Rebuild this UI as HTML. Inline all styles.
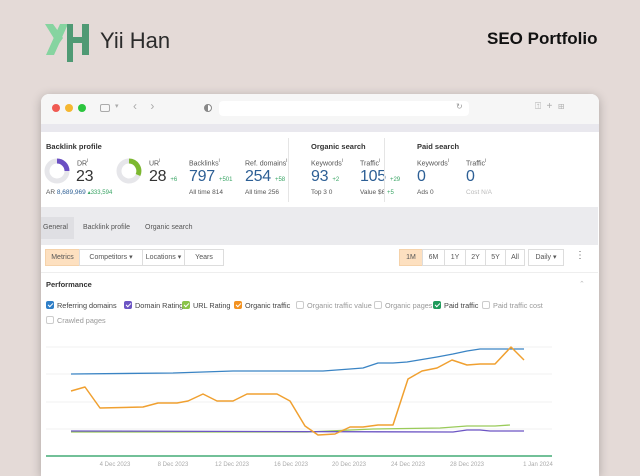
<!DOCTYPE html>
<html style="overflow:hidden;width:640px;height:476px"><head><meta charset="utf-8"><style>
*{margin:0;padding:0;box-sizing:border-box}
body{width:640px;height:476px;background:#e4dad7;position:relative;overflow:hidden;font-family:"Liberation Sans",sans-serif;color:#333}
.a{position:absolute;white-space:nowrap}
.s{font-size:7px;color:#555}
.big{font-size:16px;color:#333;letter-spacing:-0.3px}
.blue{color:#2d5f95}
.g{color:#3aa565;font-size:6px;letter-spacing:0}
.btn{position:absolute;top:249px;height:17px;border:1px solid #ddd;background:#fff;font-size:7px;color:#555;text-align:center;line-height:15px}
.cb{display:inline-block;width:8px;height:8px;border-radius:2px;vertical-align:-1px;margin-right:3px;position:relative}
.cb.on::after{content:"";position:absolute;left:2.5px;top:0.5px;width:2px;height:4px;border:solid #fff;border-width:0 1.3px 1.3px 0;transform:rotate(45deg)}
.off{border:1px solid #ccc;background:#fff}
.leg{position:absolute;font-size:7.3px;color:#444;white-space:nowrap}
</style></head><body>
<svg class="a" style="left:44px;top:22px" width="48" height="42" viewBox="44 22 48 42">
<polygon points="45,24 53,24 63,38 58,45" fill="#86d4a0"/>
<polygon points="60,24 68,24 54,55 46,55" fill="#86d4a0"/>
<rect x="67" y="24" width="6" height="38" fill="#4f9a74"/>
<rect x="82" y="24" width="7" height="31" fill="#4f9a74"/>
<rect x="67" y="37" width="22" height="6" fill="#4f9a74"/>
</svg>
<div class="a" style="left:100px;top:28px;font-size:22px;font-weight:500;color:#2b2b2b">Yii Han</div>
<div class="a" style="left:487px;top:29px;font-size:17px;font-weight:bold;color:#111">SEO Portfolio</div>

<div class="a" style="left:41px;top:94px;width:558px;height:382px;background:#fff;border-radius:8px 8px 0 0;box-shadow:0 2px 10px rgba(0,0,0,.25);overflow:hidden">
 <div style="height:30px;background:#f6f6f6"></div>
 <div style="height:8px;background:#e9e8ee"></div>
</div>
<div class="a" style="left:52px;top:104px;width:8px;height:8px;border-radius:50%;background:#f05a52"></div>
<div class="a" style="left:65px;top:104px;width:8px;height:8px;border-radius:50%;background:#f5b731"></div>
<div class="a" style="left:78px;top:104px;width:8px;height:8px;border-radius:50%;background:#2bc53e"></div>
<div class="a" style="left:100px;top:104px;width:10px;height:8px;border:1px solid #aaa;border-radius:2px"></div>
<div class="a" style="left:115px;top:102px;font-size:7px;color:#aaa">▾</div>
<div class="a" style="left:133px;top:99px;font-size:12px;color:#aaa">‹&nbsp;&nbsp;&nbsp;&nbsp;›</div>
<div class="a" style="left:204px;top:104px;width:8px;height:8px;border-radius:50%;border:1px solid #888;background:linear-gradient(90deg,#888 50%,#fff 50%)"></div>
<div class="a" style="left:219px;top:101px;width:250px;height:15px;background:#fff;border-radius:4px"></div>
<div class="a" style="left:456px;top:102px;font-size:8px;color:#999">↻</div>
<div class="a" style="left:535px;top:101px;font-size:10px;color:#aaa">⍐&nbsp;&nbsp;+&nbsp;&nbsp;⊞</div>

<div class="a" style="left:46px;top:142px;font-size:7.5px;font-weight:bold;color:#333">Backlink profile</div>
<svg class="a" style="left:44px;top:158px" width="26" height="26"><circle cx="13" cy="13" r="10" fill="none" stroke="#e6e6ea" stroke-width="5"/><path d="M13 3 A10 10 0 0 1 23 13" fill="none" stroke="#6b4fc3" stroke-width="5"/></svg>
<svg class="a" style="left:116px;top:158px" width="26" height="26"><circle cx="13" cy="13" r="10" fill="none" stroke="#e6e6ea" stroke-width="5"/><path d="M13 3 A10 10 0 0 1 22 17" fill="none" stroke="#7cb82f" stroke-width="5"/></svg>
<div class="a s" style="left:77px;top:158px">DR<sup style="font-size:5px">i</sup></div>
<div class="a big" style="left:76px;top:168px">23</div>
<div class="a s" style="left:46px;top:189px;font-size:6.5px">AR <span class="blue">8,689,969</span> <span class="g">▴333,594</span></div>
<div class="a s" style="left:149px;top:158px">UR<sup style="font-size:5px">i</sup></div>
<div class="a big" style="left:149px;top:168px">28 <span class="g">+6</span></div>
<div class="a s" style="left:189px;top:158px">Backlinks<sup style="font-size:5px">i</sup></div>
<div class="a big blue" style="left:189px;top:168px">797 <span class="g">+501</span></div>
<div class="a s" style="left:189px;top:189px;font-size:6.5px">All time 814</div>
<div class="a s" style="left:245px;top:158px">Ref. domains<sup style="font-size:5px">i</sup></div>
<div class="a big blue" style="left:245px;top:168px">254 <span class="g">+58</span></div>
<div class="a s" style="left:245px;top:189px;font-size:6.5px">All time 256</div>
<div class="a" style="left:288px;top:138px;width:1px;height:64px;background:#e5e5e5"></div>
<div class="a" style="left:311px;top:142px;font-size:7.5px;font-weight:bold;color:#333">Organic search</div>
<div class="a s" style="left:311px;top:158px">Keywords<sup style="font-size:5px">i</sup></div>
<div class="a big blue" style="left:311px;top:168px">93 <span class="g">+2</span></div>
<div class="a s" style="left:311px;top:189px;font-size:6.5px">Top 3 0</div>
<div class="a s" style="left:360px;top:158px">Traffic<sup style="font-size:5px">i</sup></div>
<div class="a big blue" style="left:360px;top:168px">105 <span class="g">+29</span></div>
<div class="a s" style="left:360px;top:189px;font-size:6.5px">Value $6 <span class="g">+5</span></div>
<div class="a" style="left:384px;top:138px;width:1px;height:64px;background:#e5e5e5"></div>
<div class="a" style="left:417px;top:142px;font-size:7.5px;font-weight:bold;color:#333">Paid search</div>
<div class="a s" style="left:417px;top:158px">Keywords<sup style="font-size:5px">i</sup></div>
<div class="a big blue" style="left:417px;top:168px">0</div>
<div class="a s" style="left:417px;top:189px;font-size:6.5px">Ads 0</div>
<div class="a s" style="left:466px;top:158px">Traffic<sup style="font-size:5px">i</sup></div>
<div class="a big blue" style="left:466px;top:168px">0</div>
<div class="a s" style="left:466px;top:189px;font-size:6.5px;color:#bbb">Cost N/A</div>

<div class="a" style="left:41px;top:207px;width:557px;height:38px;background:#ebebee"></div>
<div class="a" style="left:41px;top:217px;width:33px;height:22px;background:#dfdfe3"></div>
<div class="a s" style="left:43px;top:224px">General</div>
<div class="a s" style="left:83px;top:224px">Backlink profile</div>
<div class="a s" style="left:145px;top:224px">Organic search</div>

<div class="btn" style="left:45px;width:35px;background:#fde0c0;border-color:#f5d2aa">Metrics</div>
<div class="btn" style="left:79px;width:64px">Competitors ▾</div>
<div class="btn" style="left:142px;width:43px">Locations ▾</div>
<div class="btn" style="left:184px;width:40px">Years</div>
<div class="btn" style="left:399px;width:24px;background:#fde0c0;border-color:#f5d2aa">1M</div>
<div class="btn" style="left:422px;width:23px">6M</div>
<div class="btn" style="left:444px;width:22px">1Y</div>
<div class="btn" style="left:465px;width:21px">2Y</div>
<div class="btn" style="left:485px;width:21px">5Y</div>
<div class="btn" style="left:505px;width:20px">All</div>
<div class="btn" style="left:528px;width:36px">Daily ▾</div>
<div class="a" style="left:575px;top:250px;font-size:10px;color:#666">⋮</div>
<div class="a" style="left:41px;top:272px;width:557px;height:1px;background:#eee"></div>

<div class="a" style="left:46px;top:280px;font-size:7.5px;font-weight:bold;color:#333">Performance</div>
<div class="a" style="left:579px;top:280px;font-size:7px;color:#bbb">⌃</div>
<div class="leg" style="left:46px;top:301px"><span class="cb on" style="background:#2f7fc8"></span>Referring domains</div>
<div class="leg" style="left:124px;top:301px"><span class="cb on" style="background:#6c55c4"></span>Domain Rating</div>
<div class="leg" style="left:182px;top:301px"><span class="cb on" style="background:#8bc34a"></span>URL Rating</div>
<div class="leg" style="left:234px;top:301px"><span class="cb on" style="background:#f39221"></span>Organic traffic</div>
<div class="leg" style="left:296px;top:301px;color:#999"><span class="cb off"></span>Organic traffic value</div>
<div class="leg" style="left:374px;top:301px;color:#999"><span class="cb off"></span>Organic pages</div>
<div class="leg" style="left:433px;top:301px"><span class="cb on" style="background:#1e9a5a"></span>Paid traffic</div>
<div class="leg" style="left:482px;top:301px;color:#999"><span class="cb off"></span>Paid traffic cost</div>
<div class="leg" style="left:46px;top:316px;color:#999"><span class="cb off"></span>Crawled pages</div>

<svg class="a" style="left:0;top:0" width="640" height="476">
<g stroke="#f0f0f0" stroke-width="1"><line x1="46" y1="347" x2="552" y2="347"/><line x1="46" y1="374" x2="552" y2="374"/><line x1="46" y1="402" x2="552" y2="402"/><line x1="46" y1="429" x2="552" y2="429"/></g>
<g fill="none" stroke-width="1.3" stroke-linejoin="round">
<polyline stroke="#3a84c4" points="71,374 173,373 233,371 323,371 350,369 363,368 378,363 393,363 407,362 437,357 453,354 467,351 480,349 524,349"/>
<polyline stroke="#9acb5a" points="71,432 307,432 373,429 440,428 467,426 495,426 510,425"/>
<polyline stroke="#6c55c4" points="71,431 453,432 467,430 480,430 490,431 524,431"/>
<polyline stroke="#f0a030" stroke-width="1.5" points="71,391 85,387 100,408 143,407 158,403 177,403 188,401 203,394 217,401 233,401 247,394 277,394 290,401 305,426 318,435 335,434 350,427 363,427 378,425 393,425 408,379 422,371 437,368 452,360 467,365 480,364 495,364 511,347 524,360"/>
<line x1="46" y1="456" x2="552" y2="456" stroke="#1e9a5a" stroke-width="1.3"/>
</g>
<g font-family="Liberation Sans" font-size="6" fill="#aaa" text-anchor="middle">
<text x="115" y="466">4 Dec 2023</text><text x="173" y="466">8 Dec 2023</text><text x="232" y="466">12 Dec 2023</text><text x="291" y="466">16 Dec 2023</text><text x="349" y="466">20 Dec 2023</text><text x="408" y="466">24 Dec 2023</text><text x="467" y="466">28 Dec 2023</text><text x="538" y="466">1 Jan 2024</text>
</g>
</svg>
</body></html>
